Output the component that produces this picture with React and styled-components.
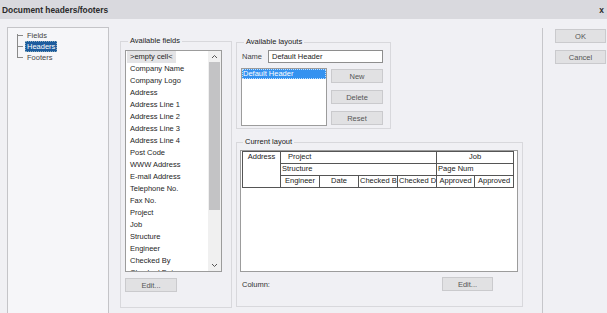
import React from 'react';
import styled, { createGlobalStyle } from 'styled-components';

const GlobalStyle = createGlobalStyle`
  html, body {
    margin: 0;
    padding: 0;
    background: #f0f0f4;
  }
  * {
    box-sizing: border-box;
  }
`;

// Window frame
const Window = styled.div`
  width: 607px;
  height: 313px;
  overflow: hidden;
  background: #f0f0f4;
  font-family: "Liberation Sans", Arial, sans-serif;
  font-size: 7.5px;
  color: #222;
`;

const TitleBar = styled.div`
  height: 19px;
  display: flex;
  align-items: center;
  justify-content: space-between;
  padding: 0 3px 0 2px;
  background: #d9d9de;
  font-size: 8.4px;
  font-weight: bold;
  color: #2a2a2a;
`;

const Body = styled.div`
  display: flex;
  align-items: flex-start;
  height: 294px;
  padding: 8px 0 0 7px;
`;

// Left tree
const TreeBox = styled.div`
  flex-shrink: 0;
  width: 102px;
  height: 300px;
  border: 1px solid #c4c4c8;
  background: #f6f6f9;
  padding: 2px 0 0 9px;
`;

const TreeList = styled.div`
  position: relative;
  display: flex;
  flex-direction: column;
  &::before {
    content: '';
    position: absolute;
    left: 0;
    top: 4px;
    bottom: 5px;
    width: 1px;
    background: #8a8a8a;
  }
`;

const TreeItem = styled.div`
  position: relative;
  height: 11px;
  line-height: 11px;
  margin-left: 8px;
  &::before {
    content: '';
    position: absolute;
    left: -8px;
    top: 5px;
    width: 6px;
    height: 1px;
    background: #8a8a8a;
  }
`;

const TreeLabel = styled.span`
  display: inline-block;
  padding: 0 2px;
  height: 11px;
  color: ${(p) => (p.$selected ? '#fff' : '#444')};
  background: ${(p) => (p.$selected ? '#1d5c9e' : 'transparent')};
  outline: ${(p) => (p.$selected ? '1px dotted #8ab' : 'none')};
  outline-offset: -1px;
`;

// Group boxes
const Group = styled.fieldset`
  flex-shrink: 0;
  margin: ${(p) => p.$margin || '0'};
  padding: ${(p) => p.$pad};
  width: ${(p) => p.$width}px;
  min-width: 0;
  border: 1px solid #d8d8dc;
`;

const Legend = styled.legend`
  margin-left: 3px;
  padding: 0 2px;
  line-height: 10px;
  color: #222;
`;

const Column = styled.div`
  display: flex;
  flex-direction: column;
  margin: ${(p) => p.$margin || '0'};
`;

// Lists
const ListBox = styled.div`
  display: flex;
  width: ${(p) => p.$width}px;
  height: ${(p) => p.$height}px;
  border: 1px solid #9c9c9c;
  background: #fff;
  overflow: hidden;
`;

const ListItems = styled.div`
  flex: 1;
  display: flex;
  flex-direction: column;
  overflow: hidden;
`;

const ListRow = styled.div`
  flex-shrink: 0;
  height: 12px;
  line-height: 12px;
  padding-left: 4px;
  white-space: nowrap;
  color: #1e1e1e;
`;

const EmptyCell = styled.span`
  display: inline-block;
  margin-left: -3px;
  padding: 0 3px;
  background: #e4e4e6;
`;

const SelectedRow = styled.div`
  height: 10px;
  line-height: 10px;
  padding-left: 1px;
  background: #3592f0;
  color: #fff;
  outline: 1px dotted #bfe0ff;
  outline-offset: -1px;
`;

const Scrollbar = styled.div`
  width: 13px;
  display: flex;
  flex-direction: column;
  align-items: center;
  background: #f0f0f0;
`;

const ScrollArrow = styled.div`
  height: 11px;
  display: flex;
  align-items: center;
  justify-content: center;
`;

const ScrollThumb = styled.div`
  width: 11px;
  height: 148px;
  background: #c3c3c5;
`;

const ScrollSpace = styled.div`
  flex: 1;
`;

// Buttons and inputs
const Button = styled.div`
  flex-shrink: 0;
  width: ${(p) => p.$width || 52}px;
  height: 14px;
  display: flex;
  align-items: center;
  justify-content: center;
  background: #e1e1e3;
  border: 1px solid #cacacd;
  color: #555;
`;

const Row = styled.div`
  display: flex;
  align-items: ${(p) => p.$align || 'center'};
  margin: ${(p) => p.$margin || '0'};
  gap: ${(p) => p.$gap || 0}px;
`;

const FieldLabel = styled.span`
  width: ${(p) => p.$width}px;
  padding-left: 1px;
  color: #444;
`;

const TextInput = styled.div`
  width: 115px;
  height: 13px;
  line-height: 11px;
  padding-left: 3px;
  border: 1px solid #8e8e8e;
  background: #fff;
  color: #222;
`;

const ButtonStack = styled.div`
  display: flex;
  flex-direction: column;
  gap: ${(p) => p.$gap || 7}px;
  margin: ${(p) => p.$margin || '0'};
`;

// Current layout canvas
const Canvas = styled.div`
  width: 278px;
  height: 122px;
  border: 1px solid #9c9c9c;
  background: #fff;
  padding-left: 1px;
`;

const LayoutTable = styled.table`
  width: 272px;
  border-collapse: collapse;
  table-layout: fixed;
  font-size: 7.5px;
`;

const Cell = styled.td`
  height: 12px;
  padding: 0 ${(p) => p.$pad || 1}px;
  border: 1px solid #555;
  line-height: 10px;
  color: #222;
  text-align: ${(p) => p.$align || 'center'};
  vertical-align: top;
  white-space: nowrap;
  overflow: hidden;
`;

const ColumnRow = styled.div`
  display: flex;
  align-items: center;
  justify-content: space-between;
  margin-top: 5px;
  padding: 0 26px 0 2px;
  color: #333;
`;

// Right side
const Separator = styled.div`
  flex-shrink: 0;
  width: 1px;
  height: 300px;
  margin: 1px 0 0 19px;
  background: #c6c6ca;
`;

const Chevron = ({ up }) => (
  <svg width="7" height="5" viewBox="0 0 7 5">
    <polyline
      points={up ? '1,4 3.5,1.5 6,4' : '1,1 3.5,3.5 6,1'}
      fill="none"
      stroke="#555"
      strokeWidth="1"
    />
  </svg>
);

const fields = [
  'Company Name',
  'Company Logo',
  'Address',
  'Address Line 1',
  'Address Line 2',
  'Address Line 3',
  'Address Line 4',
  'Post Code',
  'WWW Address',
  'E-mail Address',
  'Telephone No.',
  'Fax No.',
  'Project',
  'Job',
  'Structure',
  'Engineer',
  'Checked By',
  'Checked Date',
];

const App = () => {
  return (
    <Window>
      <GlobalStyle />
      <TitleBar>
        <span>Document headers/footers</span>
        <span>x</span>
      </TitleBar>
      <Body>
        <TreeBox>
          <TreeList>
            <TreeItem><TreeLabel>Fields</TreeLabel></TreeItem>
            <TreeItem><TreeLabel $selected>Headers</TreeLabel></TreeItem>
            <TreeItem><TreeLabel>Footers</TreeLabel></TreeItem>
          </TreeList>
        </TreeBox>

        <Group $width={112} $margin="9px 0 0 11px" $pad="4px 9px 15px 4px">
          <Legend>Available fields</Legend>
          <ListBox $width={97} $height={222}>
            <ListItems>
              <ListRow><EmptyCell>&gt;empty cell&lt;</EmptyCell></ListRow>
              {fields.map((f) => (
                <ListRow key={f}>{f}</ListRow>
              ))}
            </ListItems>
            <Scrollbar>
              <ScrollArrow><Chevron up /></ScrollArrow>
              <ScrollThumb />
              <ScrollSpace />
              <ScrollArrow><Chevron /></ScrollArrow>
            </Scrollbar>
          </ListBox>
          <Row $margin="6px 0 0 0">
            <Button>Edit...</Button>
          </Row>
        </Group>

        <Column $margin="10px 0 0 4px">
          <Group $width={155} $pad="3px 4px 2px 4px">
            <Legend>Available layouts</Legend>
            <Row>
              <FieldLabel $width={27}>Name</FieldLabel>
              <TextInput>Default Header</TextInput>
            </Row>
            <Row $align="flex-start" $margin="5px 0 0 0" $gap={4}>
              <ListBox $width={86} $height={58}>
                <ListItems>
                  <SelectedRow>Default Header</SelectedRow>
                </ListItems>
              </ListBox>
              <ButtonStack $gap={7} $margin="1px 0 0 0">
                <Button>New</Button>
                <Button>Delete</Button>
                <Button>Reset</Button>
              </ButtonStack>
            </Row>
          </Group>

          <Group $width={287} $margin="8px 0 0 0" $pad="3px 3px 15px 3px">
            <Legend>Current layout</Legend>
            <Canvas>
              <LayoutTable>
                <colgroup>
                  <col style={{ width: 38 }} />
                  <col style={{ width: 39 }} />
                  <col style={{ width: 39 }} />
                  <col style={{ width: 39 }} />
                  <col style={{ width: 39 }} />
                  <col style={{ width: 38 }} />
                  <col style={{ width: 39 }} />
                </colgroup>
                <tbody>
                  <tr>
                    <Cell rowSpan={3}>Address</Cell>
                    <Cell colSpan={4} $align="left" $pad={7}>Project</Cell>
                    <Cell colSpan={2}>Job</Cell>
                  </tr>
                  <tr>
                    <Cell colSpan={4} $align="left">Structure</Cell>
                    <Cell colSpan={2} $align="left">Page Num</Cell>
                  </tr>
                  <tr>
                    <Cell>Engineer</Cell>
                    <Cell>Date</Cell>
                    <Cell $pad={0}>Checked B</Cell>
                    <Cell $pad={0}>Checked D</Cell>
                    <Cell>Approved</Cell>
                    <Cell>Approved</Cell>
                  </tr>
                </tbody>
              </LayoutTable>
            </Canvas>
            <ColumnRow>
              <span>Column:</span>
              <Button $width={51}>Edit...</Button>
            </ColumnRow>
          </Group>
        </Column>

        <Separator />

        <ButtonStack $gap={7} $margin="2px 0 0 12px">
          <Button $width={51}>OK</Button>
          <Button $width={51}>Cancel</Button>
        </ButtonStack>
      </Body>
    </Window>
  );
};

export default App;
